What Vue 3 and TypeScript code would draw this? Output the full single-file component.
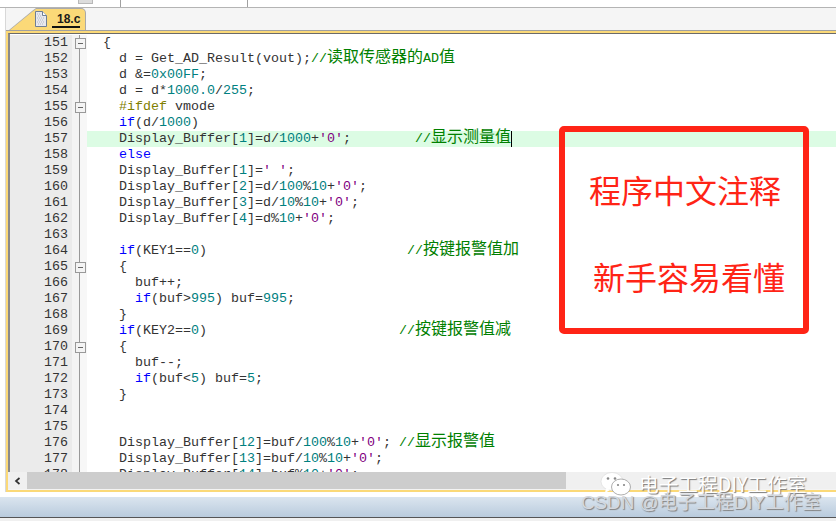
<script setup lang="ts">
type Tok = [string, string];
const p = (t: string): Tok => ['p', t];
const k = (t: string): Tok => ['k', t];
const n = (t: string): Tok => ['n', t];
const c = (t: string): Tok => ['c', t];
const z = (t: string): Tok => ['c z', t];
const s = (t: string): Tok => ['s', t];
const d = (t: string): Tok => ['d', t];

interface Line { no: number; fold?: boolean; active?: boolean; toks: Tok[] }

const lines: Line[] = [
  { no: 151, fold: true, toks: [p('  {')] },
  { no: 152, toks: [p('    d = Get_AD_Result(vout);'), c('//'), z('读取传感器的'), c('AD'), z('值')] },
  { no: 153, toks: [p('    d &='), n('0x00FF'), p(';')] },
  { no: 154, toks: [p('    d = d*'), n('1000.0'), p('/'), n('255'), p(';')] },
  { no: 155, fold: true, toks: [p('    '), d('#ifdef'), p(' vmode')] },
  { no: 156, toks: [p('    '), k('if'), p('(d/'), n('1000'), p(')')] },
  { no: 157, active: true, toks: [p('    Display_Buffer['), n('1'), p(']=d/'), n('1000'), p('+'), s("'0'"), p(';        '), c('//'), z('显示测量值')] },
  { no: 158, toks: [p('    '), k('else')] },
  { no: 159, toks: [p('    Display_Buffer['), n('1'), p(']='), s("' '"), p(';')] },
  { no: 160, toks: [p('    Display_Buffer['), n('2'), p(']=d/'), n('100'), p('%'), n('10'), p('+'), s("'0'"), p(';')] },
  { no: 161, toks: [p('    Display_Buffer['), n('3'), p(']=d/'), n('10'), p('%'), n('10'), p('+'), s("'0'"), p(';')] },
  { no: 162, toks: [p('    Display_Buffer['), n('4'), p(']=d%'), n('10'), p('+'), s("'0'"), p(';')] },
  { no: 163, toks: [p(' ')] },
  { no: 164, toks: [p('    '), k('if'), p('(KEY1=='), n('0'), p(')                         '), c('//'), z('按键报警值加')] },
  { no: 165, fold: true, toks: [p('    {')] },
  { no: 166, toks: [p('      buf++;')] },
  { no: 167, toks: [p('      '), k('if'), p('(buf>'), n('995'), p(') buf='), n('995'), p(';')] },
  { no: 168, toks: [p('    }')] },
  { no: 169, toks: [p('    '), k('if'), p('(KEY2=='), n('0'), p(')                        '), c('//'), z('按键报警值减')] },
  { no: 170, fold: true, toks: [p('    {')] },
  { no: 171, toks: [p('      buf--;')] },
  { no: 172, toks: [p('      '), k('if'), p('(buf<'), n('5'), p(') buf='), n('5'), p(';')] },
  { no: 173, toks: [p('    }')] },
  { no: 174, toks: [p(' ')] },
  { no: 175, toks: [p(' ')] },
  { no: 176, toks: [p('    Display_Buffer['), n('12'), p(']=buf/'), n('100'), p('%'), n('10'), p('+'), s("'0'"), p('; '), c('//'), z('显示报警值')] },
  { no: 177, toks: [p('    Display_Buffer['), n('13'), p(']=buf/'), n('10'), p('%'), n('10'), p('+'), s("'0'"), p(';')] },
  { no: 178, toks: [p('    Display_Buffer['), n('14'), p(']=buf%'), n('10'), p('+'), s("'0'"), p(';')] },
];
</script>

<template>
  <div class="app">
    <div class="menu-strip">
      <span class="strip-btn"></span>
      <span class="strip-sep first"></span>
      <span class="strip-sep second"></span>
    </div>
    <div class="workspace">
      <div class="tabbar">
        <div class="tab">
          <svg class="file-icon" width="12" height="16" viewBox="0 0 12 16">
            <path d="M.5.5h7l4 4v11H.5z" fill="#e8e8ee" stroke="#6f7f96" />
            <path d="M2 3h1M4 3h1M3 5h1M5 5h1M2 7h1M4 7h1M6 7h1M8 7h1M3 9h1M5 9h1M7 9h1M2 11h1M4 11h1M6 11h1M8 11h1M3 13h1M5 13h1M7 13h1" stroke="#b4bac6" />
            <path d="M7.5.5v4h4" fill="#fff" stroke="#6f7f96" />
          </svg>
          <span class="tab-name">18.c</span>
        </div>
      </div>
      <div class="frame">
        <div class="code">
          <div v-for="line in lines" :key="line.no" class="row">
            <span class="no">{{ line.no }}</span>
            <span class="fold">
              <span v-if="line.fold" class="fold-box"></span>
            </span>
            <span class="text" :class="{ active: line.active }"><span
                v-for="(tok, i) in line.toks" :key="i" :class="tok[0]">{{ tok[1] }}</span><span
                v-if="line.active" class="caret"></span></span>
          </div>
        </div>
        <div class="hscroll">
          <span class="arrow">
            <svg width="8" height="8" viewBox="0 0 8 8"><path d="M5.500 1 2 4l3.500 3" fill="none" stroke="#333" stroke-width="1.700" /></svg>
          </span>
          <span class="thumb"></span>
        </div>
      </div>
    </div>
    <div class="status"></div>
    <div class="status-end"></div>

    <div class="note">
      <div class="note-a">程序中文注释</div>
      <div class="note-b">新手容易看懂</div>
    </div>

    <div class="wm-one">
      <svg width="32" height="24" viewBox="0 0 32 24">
        <ellipse cx="12" cy="9.500" rx="11" ry="9" fill="#fff" stroke="#d8d8d8" stroke-width=".6" />
        <path d="M6 16 5 21l5-3z" fill="#fff" />
        <ellipse cx="21" cy="15" rx="9.500" ry="8" fill="#fff" stroke="#999" stroke-width=".8" />
        <circle cx="8" cy="6.500" r="1.300" fill="#888" />
        <circle cx="15" cy="6.500" r="1.300" fill="#888" />
        <circle cx="18" cy="13" r="1.100" fill="#888" />
        <circle cx="24" cy="13" r="1.100" fill="#888" />
      </svg>
      <span>电子工程DIY工作室</span>
    </div>
    <div class="wm-two">CSDN @电子工程DIY工作室</div>
  </div>
</template>

<style>
html, body { margin: 0; padding: 0; background: #fff; }
</style>

<style scoped>
.app {
  position: relative;
  width: 836px;
  height: 522px;
  overflow: hidden;
  background: #fff;
  display: flex;
  flex-direction: column;
  font-family: "Liberation Mono", "Noto Sans CJK SC", monospace;
}
.menu-strip {
  position: relative;
  height: 7px;
  flex: none;
  border-bottom: 1px solid #b4b4b4;
}
.strip-btn {
  position: absolute;
  left: 78px;
  top: 0;
  width: 13px;
  height: 3px;
  background: #dcdcdc;
  border: 1px solid #b8b8b8;
  border-top: 0;
}
.strip-sep {
  position: absolute;
  top: 0;
  width: 1px;
  height: 7px;
  background: #a0a0a0;
}
.strip-sep.first { left: 120px; }
.strip-sep.second { left: 247px; }
.workspace {
  flex: none;
  height: 484px;
  margin-left: 5px;
  display: flex;
  flex-direction: column;
  border-left: 1px solid #d8d8d8;
}
.tabbar {
  flex: none;
  height: 22px;
  background: #f5f5f5;
  display: flex;
  align-items: flex-end;
}
.tab {
  position: relative;
  width: 77px;
  margin-left: 3px;
  height: 22px;
  box-sizing: border-box;
  display: flex;
  align-items: flex-start;
  padding: 3px 0 0 26px;
  background: #a9a9a9;
  clip-path: polygon(0 100%, 23px 3px, 27px 0, 100% 0, 100% 100%);
  border-radius: 0 5px 0 0;
}
.tab::before {
  content: "";
  position: absolute;
  left: 1px;
  right: 1px;
  top: 1px;
  bottom: 0;
  background: #fbd978;
  border-radius: 0 4px 0 0;
  clip-path: polygon(0 100%, 22px 3px, 26px 0, 100% 0, 100% 100%);
}
.file-icon { position: relative; flex: none; }
.tab-name {
  position: relative;
  font-family: "Liberation Sans", sans-serif;
  font-weight: 700;
  font-size: 12px;
  line-height: 16px;
  color: #1a1a1a;
  height: 15px;
  width: 23px;
  margin-left: 5px;
  padding-left: 5px;
  border-bottom: 2px solid #111;
  white-space: nowrap;
}
.frame {
  flex: 1;
  min-height: 0;
  display: flex;
  flex-direction: column;
  background: #fbd978;
  border-top: 1px solid #a0a0a0;
  padding: 2px 0 2px 2px;
}
.code {
  flex: 1;
  min-height: 0;
  overflow: hidden;
  background: #fff;
  border-top: 1px solid #6a6a6a;
  border-left: 2px solid #8a8a8a;
  padding-top: 1px;
}
.row {
  display: flex;
  height: 16px;
  line-height: 16px;
  font-size: 13.333px;
  white-space: pre;
}
.no {
  flex: none;
  width: 60px;
  padding-right: 2px;
  box-sizing: border-box;
  background: #ebebeb;
  text-align: right;
  color: #333;
}
.fold {
  flex: none;
  width: 17px;
  position: relative;
  background: linear-gradient(90deg, #ebebeb 0 2px, #f4f4f4 2px 9px, #999 9px 10px, #f7f7f7 10px 100%);
}
.fold-box {
  position: absolute;
  left: 5px;
  top: 3px;
  width: 9px;
  height: 9px;
  background: #f4f4f4;
  border: 1px solid #999;
}
.fold-box::after {
  content: "";
  position: absolute;
  left: 2px;
  top: 4px;
  width: 5px;
  height: 1px;
  background: #666;
}
.text {
  flex: 1;
  color: #333;
}
.text.active { background: #dcfce4; }
.caret {
  display: inline-block;
  width: 1px;
  height: 16px;
  vertical-align: top;
  background: #000;
}
.k { color: #0000ff; }
.n { color: #008080; }
.c { color: #008000; }
.z { font-family: "Noto Sans CJK SC", sans-serif; font-size: 16px; line-height: 0; }
.s { color: #800080; }
.d { color: #808000; }
.hscroll {
  flex: none;
  height: 17px;
  display: flex;
  background: #f0f0f0;
  border-bottom: 1px solid #f4f4f4;
}
.arrow {
  flex: none;
  width: 19px;
  display: flex;
  align-items: center;
  justify-content: center;
}
.thumb {
  flex: none;
  width: 539px;
  background: #cdcdcd;
}
.status {
  flex: none;
  height: 20px;
  margin-top: 5px;
  background: linear-gradient(180deg, #dbe5ef, #b9cbdd);
}
.status-end {
  flex: none;
  border-top: 1px solid #555;
  height: 3px;
  background: #f0f0f0;
}
.note {
  position: absolute;
  left: 559px;
  top: 126px;
  width: 250px;
  height: 208px;
  box-sizing: border-box;
  border: 6px solid #ff2416;
  border-radius: 5px;
  font-family: "Noto Sans CJK SC", sans-serif;
  font-size: 32px;
  line-height: 40px;
  color: #ff2416;
}
.note-a { position: absolute; left: 24px; top: 37px; white-space: nowrap; }
.note-b { position: absolute; left: 28px; top: 124px; white-space: nowrap; }
.wm-one {
  position: absolute;
  left: 600px;
  top: 472px;
  display: flex;
  align-items: center;
  gap: 7px;
  font-family: "Noto Sans CJK SC", sans-serif;
  font-size: 19.7px;
  line-height: 24px;
  color: #fff;
  text-shadow: 1px 1px 1px #777;
  white-space: nowrap;
}
.wm-two {
  position: absolute;
  left: 581px;
  top: 491px;
  font-family: "Liberation Sans", "Noto Sans CJK SC", sans-serif;
  font-size: 18.8px;
  line-height: 24px;
  color: #d4d8de;
  text-shadow: 1px 1px 1px #808080;
  white-space: nowrap;
}
</style>
